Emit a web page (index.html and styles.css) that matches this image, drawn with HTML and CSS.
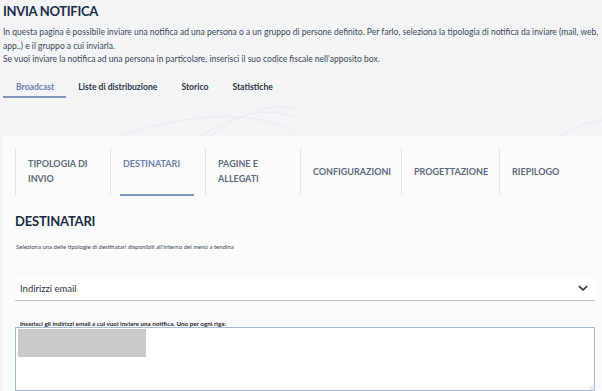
FILE: index.html
```html
<!DOCTYPE html>
<html lang="it">
<head>
<meta charset="utf-8">
<title>Invia notifica</title>
<link rel="stylesheet" href="styles.css">
</head>
<body>
<div class="page">
  <svg class="waves" width="602" height="140" viewBox="0 0 602 140" aria-hidden="true">
    <g fill="none" stroke="#e7e9ed" stroke-width="0.8">
      <path d="M120 136 C 200 110, 260 110, 300 136"/>
      <path d="M200 136 C 240 112, 270 105, 300 120"/>
      <path d="M210 136 C 250 108, 280 100, 300 112"/>
      <path d="M560 136 C 575 126, 590 122, 602 120"/>
    </g>
  </svg>
  <header class="intro">
    <h1 class="title">INVIA NOTIFICA</h1>
    <p class="lead"><span class="line">In questa pagina è possibile inviare una notifica ad una persona o a un gruppo di persone definito. Per farlo, seleziona la tipologia di notifica da inviare (mail, web,</span> <span class="line">app..) e il gruppo a cui inviarla.</span> <span class="line">Se vuoi inviare la notifica ad una persona in particolare, inserisci il suo codice fiscale nell'apposito box.</span></p>
    <nav class="tabs">
      <a class="tab tab-active">Broadcast</a>
      <a class="tab">Liste di distribuzione</a>
      <a class="tab">Storico</a>
      <a class="tab">Statistiche</a>
    </nav>
  </header>

  <section class="card">
    <div class="steps">
      <div class="step step-w step-top">TIPOLOGIA DI<br>INVIO</div>
      <div class="step step-w step-top step-active">DESTINATARI</div>
      <div class="step step-w step-top">PAGINE E<br>ALLEGATI</div>
      <div class="step step-c step-4">CONFIGURAZIONI</div>
      <div class="step step-c step-5">PROGETTAZIONE</div>
      <div class="step step-c step-6">RIEPILOGO</div>
    </div>

    <div class="body">
      <h2 class="heading">DESTINATARI</h2>
      <p class="hint">Seleziona una delle tipologie di destinatari disponibili all'interno del menù a tendina</p>

      <div class="select">
        <span class="select-value">Indirizzi email</span>
        <svg class="chev" width="10" height="7" viewBox="0 0 10 7"><path d="M1 1.2 L5 5 L9 1.2" fill="none" stroke="#2b2f36" stroke-width="1.6"/></svg>
      </div>

      <label class="field-label">Inserisci gli indirizzi email a cui vuoi inviare una notifica. Uno per ogni riga:</label>
      <div class="textarea">
        <div class="redact"></div>
        <svg class="grip" width="6" height="6" viewBox="0 0 6 6"><path d="M5.5 1 L1 5.5 M5.5 3.5 L3.5 5.5" stroke="#b0b4ba" stroke-width="0.7"/></svg>
      </div>
    </div>
  </section>
</div>
</body>
</html>
```
FILE: styles.css
```css
* { box-sizing: border-box; }
html, body { margin: 0; padding: 0; }
body {
  background: #f4f5f7;
  font-family: Lato, "Liberation Sans", sans-serif;
  color: #3a4656;
  width: 602px;
  height: 391px;
  overflow: hidden;
}
.page { position: relative; }
.waves { position: absolute; left: 0; top: 0; z-index: 0; }
.intro { position: relative; z-index: 1; padding: 3px 0 0 3px; }
.title {
  margin: 0;
  font-size: 13px;
  font-weight: 700;
  color: #1b2c48;
  line-height: 17px;
  letter-spacing: -0.3px;
}
.lead {
  margin: 6px 0 0;
  font-size: 8.5px;
  line-height: 13.5px;
  color: #3b4757;
}
.line { display: block; white-space: nowrap; }
.tabs {
  display: flex;
  margin-top: 14px;
  height: 17px;
}
.tab {
  font-size: 8.6px;
  font-weight: 700;
  color: #2c3645;
  padding: 0 12px;
  line-height: 12px;
}
.tab-active {
  padding-left: 13px;
  color: #6c80b2;
  border-bottom: 2px solid #8296c4;
}
.card {
  position: relative;
  z-index: 1;
  margin: 38px 0 0 3px;
  background: #fbfbfb;
  height: 260px;
}
.steps {
  display: flex;
  padding: 12px 0 0 12px;
  height: 59px;
}
.step {
  border-left: 1px solid #e2e4e8;
  font-size: 9px;
  font-weight: 700;
  color: #5c6a7e;
  line-height: 15px;
  padding-left: 12px;
  height: 47px;
}
.step-w { width: 95px; }
.step-top { padding-top: 8px; }
.step-c { display: flex; align-items: center; }
.step-4 { width: 101px; }
.step-5 { width: 98px; }
.step-6 { width: 100px; }
.step-active { color: #6c80b2; position: relative; }
.step-active::after {
  content: "";
  position: absolute;
  left: 9px;
  width: 74px;
  bottom: -1px;
  height: 2px;
  background: #8296c4;
}
.body { padding: 18px 7px 0 12px; }
.heading {
  margin: 0;
  font-size: 13px;
  font-weight: 700;
  color: #1b2c48;
  line-height: 16px;
  letter-spacing: -0.2px;
}
.hint {
  margin: 14px 0 0 1px;
  font-size: 6px;
  line-height: 8px;
  color: #3b4757;
}
.select {
  margin-top: 27px;
  height: 23px;
  background: #ffffff;
  border-bottom: 1.5px solid #b8bec8;
  display: flex;
  align-items: center;
  justify-content: space-between;
  padding: 0 7px 0 5px;
}
.select-value { font-size: 9.5px; color: #2b323c; }
.field-label {
  display: block;
  margin: 20px 0 0 5px;
  font-size: 6.3px;
  font-weight: 700;
  color: #1e2530;
  line-height: 6px;
}
.textarea {
  position: relative;
  height: 64px;
  margin-top: 0;
  background: #fff;
  border: 1px solid #a9b9d8;
  padding: 1px 0 0 2px;
}
.redact { width: 128px; height: 28px; background: #cacaca; }
.grip { position: absolute; right: 0; bottom: 0; }
```
